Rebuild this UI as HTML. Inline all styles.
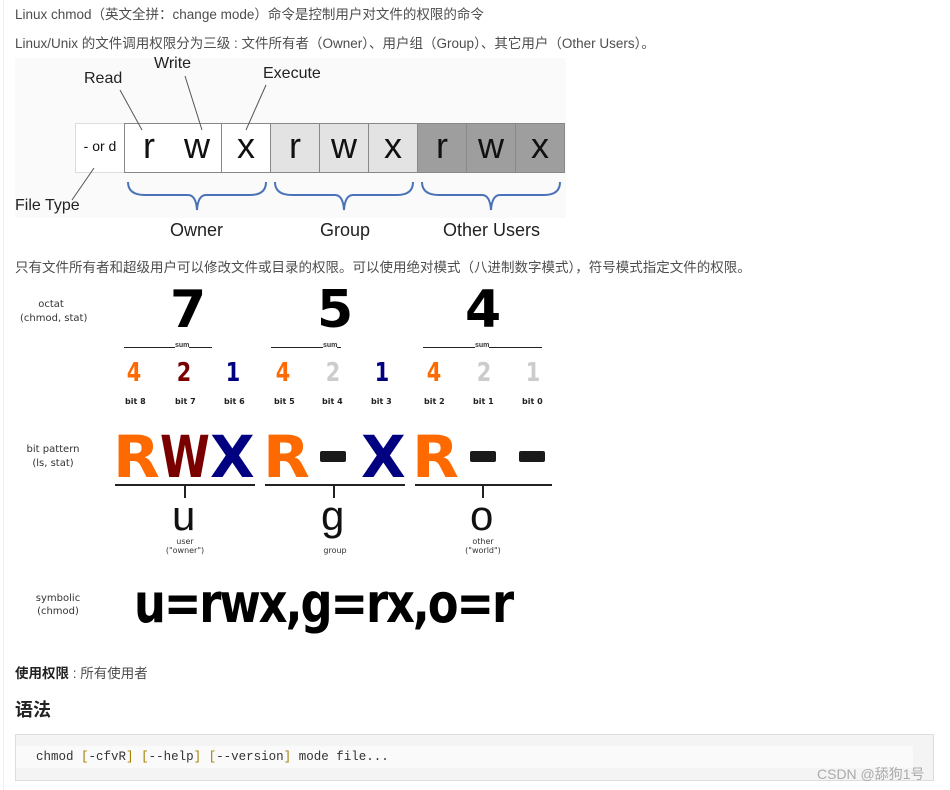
<!DOCTYPE html>
<html><head><meta charset="utf-8"><style>
body{margin:0;width:950px;height:790px;background:#fff;position:relative;overflow:hidden;font-family:"Liberation Sans","Noto Sans CJK SC",sans-serif;color:#333}
.a{position:absolute;white-space:nowrap}
.t{font-size:13.5px;color:#4d4d4d}
.c{position:absolute;top:123px;width:48px;height:48px;border:1px solid #888;border-left:none;text-align:center;font-size:36px;line-height:44px;color:#111;font-family:"Liberation Sans",sans-serif}
.lb{font-family:"Liberation Sans",sans-serif;color:#222}
.sm{font-size:11px;color:#333;text-align:center;font-family:"DejaVu Sans",sans-serif}
.dg{font-family:"DejaVu Sans",sans-serif;font-weight:bold;font-size:26px;position:absolute;top:358px;transform:scaleX(.8)}
.bt{position:absolute;top:397px;font-size:8px;font-weight:bold;font-family:"DejaVu Sans",sans-serif;color:#222}
.big{position:absolute;top:428px;font-family:"DejaVu Sans",sans-serif;font-weight:900;font-size:58px;line-height:1;transform-origin:left top}
.dash{position:absolute;top:451px;width:26px;height:11px;background:#1a1a1a;border-radius:2px}
.hl{position:absolute;height:2px;background:#222}
</style></head><body>
<div class="a" style="left:3px;top:0;width:1px;height:790px;background:#eee"></div>
<div class="a t" style="left:15px;top:3px">Linux chmod（英文全拼：change mode）命令是控制用户对文件的权限的命令</div>
<div class="a t" style="left:15px;top:32px">Linux/Unix 的文件调用权限分为三级 : 文件所有者（Owner）、用户组（Group）、其它用户（Other Users）。</div>

<div class="a" style="left:15px;top:58px;width:551px;height:160px;background:#fafafa"></div>
<div class="a lb" style="left:84px;top:70px;font-size:16px">Read</div>
<div class="a lb" style="left:154px;top:55px;font-size:16px">Write</div>
<div class="a lb" style="left:263px;top:65px;font-size:16px">Execute</div>
<div class="a lb" style="left:15px;top:197px;font-size:16px">File Type</div>
<div class="c" style="left:75px;border-left:1px solid #ddd;border-color:#ddd;font-size:14px;background:#fff">- or d</div>
<div class="c" style="left:124px;background:#fff;border-left:1px solid #888">r</div>
<div class="c" style="left:173px;background:#fff">w</div>
<div class="c" style="left:222px;background:#fff">x</div>
<div class="c" style="left:271px;background:#e3e3e3">r</div>
<div class="c" style="left:320px;background:#e3e3e3">w</div>
<div class="c" style="left:369px;background:#e3e3e3">x</div>
<div class="c" style="left:418px;background:#9e9e9e">r</div>
<div class="c" style="left:467px;background:#9e9e9e">w</div>
<div class="c" style="left:516px;background:#9e9e9e">x</div>
<svg class="a" style="left:0;top:0" width="600" height="230">
<g stroke="#555" stroke-width="1" fill="none">
<line x1="120" y1="90" x2="142" y2="130"/><line x1="185" y1="76" x2="202" y2="130"/><line x1="266" y1="85" x2="246" y2="130"/><line x1="94" y1="168" x2="72" y2="200"/></g>
<g stroke="#4a72b8" stroke-width="2" fill="none">
<path d="M128 182 Q128 195 145 195 L188 195 Q196 195 197 210 Q198 195 206 195 L250 195 Q266 195 266 182"/>
<path d="M275 182 Q275 195 292 195 L335 195 Q343 195 344 210 Q345 195 353 195 L397 195 Q413 195 413 182"/>
<path d="M422 182 Q422 195 439 195 L482 195 Q490 195 491 210 Q492 195 500 195 L544 195 Q560 195 560 182"/></g></svg>
<div class="a lb" style="left:170px;top:220px;font-size:18px">Owner</div>
<div class="a lb" style="left:320px;top:220px;font-size:18px">Group</div>
<div class="a lb" style="left:443px;top:220px;font-size:18px">Other Users</div>

<div class="a t" style="left:15px;top:256px">只有文件所有者和超级用户可以修改文件或目录的权限。可以使用绝对模式（八进制数字模式），符号模式指定文件的权限。</div>

<div class="a sm" style="left:20px;top:298px;width:62px;font-size:10px;line-height:14px">octat<br>(chmod, stat)</div>
<div class="a" style="left:170px;top:280px;font-size:52px;font-weight:900;font-family:'DejaVu Sans',sans-serif;color:#000">7</div>
<div class="a" style="left:317px;top:280px;font-size:52px;font-weight:900;font-family:'DejaVu Sans',sans-serif;color:#000">5</div>
<div class="a" style="left:465px;top:280px;font-size:52px;font-weight:900;font-family:'DejaVu Sans',sans-serif;color:#000">4</div>
<div class="hl" style="left:124px;top:347px;width:88px;height:1px"></div><div class="a" style="left:175px;top:342px;font-size:7px;background:#fff;font-weight:bold">sum</div>
<div class="hl" style="left:271px;top:347px;width:70px;height:1px"></div><div class="a" style="left:323px;top:342px;font-size:7px;background:#fff;font-weight:bold">sum</div>
<div class="hl" style="left:423px;top:347px;width:119px;height:1px"></div><div class="a" style="left:475px;top:342px;font-size:7px;background:#fff;font-weight:bold">sum</div>
<div class="dg" style="left:125px;color:#ff6a00">4</div><div class="dg" style="left:175px;color:#7a0000">2</div><div class="dg" style="left:224px;color:#000080">1</div>
<div class="dg" style="left:274px;color:#ff6a00">4</div><div class="dg" style="left:324px;color:#ccc">2</div><div class="dg" style="left:373px;color:#000080">1</div>
<div class="dg" style="left:425px;color:#ff6a00">4</div><div class="dg" style="left:475px;color:#ccc">2</div><div class="dg" style="left:524px;color:#ccc">1</div>
<div class="bt" style="left:125px">bit 8</div><div class="bt" style="left:175px">bit 7</div><div class="bt" style="left:224px">bit 6</div>
<div class="bt" style="left:274px">bit 5</div><div class="bt" style="left:322px">bit 4</div><div class="bt" style="left:371px">bit 3</div>
<div class="bt" style="left:424px">bit 2</div><div class="bt" style="left:473px">bit 1</div><div class="bt" style="left:522px">bit 0</div>

<div class="a sm" style="left:20px;top:443px;width:66px;font-size:10px;line-height:14px">bit pattern<br>(ls, stat)</div>
<div class="big" style="left:113px;color:#ff6a00;transform:scaleX(1.05)">R</div>
<div class="big" style="left:160px;color:#7a0000;transform:scaleX(.78)">W</div>
<div class="big" style="left:210px;color:#000080;transform:scaleX(1.0)">X</div>
<div class="big" style="left:263px;color:#ff6a00;transform:scaleX(1.05)">R</div>
<div class="dash" style="left:320px"></div>
<div class="big" style="left:361px;color:#000080;transform:scaleX(1.0)">X</div>
<div class="big" style="left:412px;color:#ff6a00;transform:scaleX(1.05)">R</div>
<div class="dash" style="left:470px"></div><div class="dash" style="left:519px"></div>
<div class="hl" style="left:115px;top:484px;width:140px"></div>
<div class="hl" style="left:265px;top:484px;width:140px"></div>
<div class="hl" style="left:415px;top:484px;width:137px"></div>
<div class="hl" style="left:184px;top:485px;width:2px;height:13px"></div>
<div class="hl" style="left:333px;top:485px;width:2px;height:13px"></div>
<div class="hl" style="left:482px;top:485px;width:2px;height:13px"></div>
<div class="a" style="left:172px;top:492px;font-size:42px;font-family:'Liberation Sans';color:#111">u</div>
<div class="a" style="left:321px;top:492px;font-size:42px;font-family:'Liberation Sans';color:#111">g</div>
<div class="a" style="left:470px;top:492px;font-size:42px;font-family:'Liberation Sans';color:#111">o</div>
<div class="a sm" style="left:160px;top:537px;width:50px;font-size:8px;line-height:9px">user<br>("owner")</div>
<div class="a sm" style="left:310px;top:546px;width:50px;font-size:8px">group</div>
<div class="a sm" style="left:458px;top:537px;width:50px;font-size:8px;line-height:9px">other<br>("world")</div>

<div class="a sm" style="left:25px;top:592px;width:66px;font-size:10px;line-height:13px">symbolic<br>(chmod)</div>
<div class="a" style="left:134px;top:572px;font-size:54px;font-weight:900;font-family:'DejaVu Sans',sans-serif;color:#000;letter-spacing:-2.5px;transform:scaleX(.83);transform-origin:left">u=rwx,g=rx,o=r</div>

<div class="a t" style="left:15px;top:662px"><b style="color:#222">使用权限</b> : 所有使用者</div>
<div class="a" style="left:15px;top:696px;font-size:18px;font-weight:bold;color:#222">语法</div>
<div class="a" style="left:15px;top:734px;width:917px;height:45px;border:1px solid #ddd;background:#f4f4f4"></div>
<div class="a" style="left:16px;top:746px;width:897px;height:22px;background:#fafafa"></div>
<div class="a" style="left:36px;top:750px;font-family:'Liberation Mono',monospace;font-size:12.5px;color:#333">chmod <span style="color:#a67f00">[</span>-cfvR<span style="color:#a67f00">]</span> <span style="color:#a67f00">[</span>--help<span style="color:#a67f00">]</span> <span style="color:#a67f00">[</span>--version<span style="color:#a67f00">]</span> mode file...</div>
<div class="a" style="left:817px;top:764px;font-size:14px;color:#aaa">CSDN @舔狗1号</div>
</body></html>
